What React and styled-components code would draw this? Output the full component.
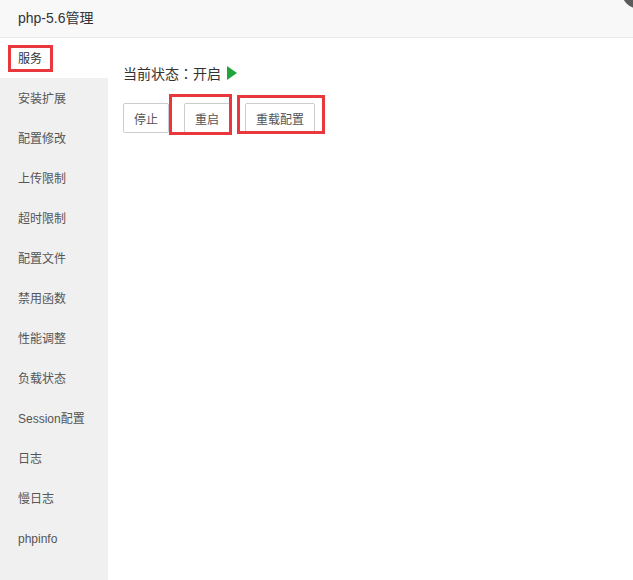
import React from "react";
import styled, { createGlobalStyle } from "styled-components";

const Global = createGlobalStyle`
  html, body { margin: 0; padding: 0; background: #fff; }
  body { font-family: "Liberation Sans", "Noto Sans CJK SC", sans-serif; overflow: hidden; }
  * { box-sizing: border-box; }
`;

const Layer = styled.div`
  position: relative;
  width: 633px;
  height: 580px;
  background: #fff;
  display: flex;
  flex-direction: column;
  overflow: hidden;
`;

const Header = styled.div`
  height: 38px;
  flex: none;
  background: #f8f8f8;
  border-bottom: 1px solid #eaeaea;
  padding: 0 0 3px 18px;
  display: flex;
  align-items: center;
  font-size: 14px;
  color: #333;
`;

const CloseDot = styled.div`
  position: absolute;
  right: -26px;
  top: -29px;
  width: 38px;
  height: 38px;
  border-radius: 50%;
  background: #5c5c5c;
`;

const Body = styled.div`
  flex: 1;
  display: flex;
  min-height: 0;
`;

const Sidebar = styled.ul`
  list-style: none;
  margin: 0;
  padding: 0;
  width: 108px;
  flex: none;
  background: #f0f0f0;
`;

const NavItem = styled.li`
  height: 40px;
  display: flex;
  align-items: center;
  padding: 2px 0 0 18px;
  font-size: 12px;
  line-height: 16px;
  color: ${(p) => (p.$active ? "#333" : "#555")};
  background: ${(p) => (p.$active ? "#fff" : "transparent")};
`;

const Marked = styled.span`
  position: relative;
  display: inline-flex;
`;

const RedBox = styled.span`
  position: absolute;
  top: ${(p) => p.$t}px;
  right: ${(p) => p.$r}px;
  bottom: ${(p) => p.$b}px;
  left: ${(p) => p.$l}px;
  border: 3px solid #e8383d;
  pointer-events: none;
`;

const Content = styled.div`
  flex: 1;
  padding: 25px 15px;
`;

const Status = styled.div`
  display: flex;
  align-items: center;
  height: 20px;
  font-size: 14px;
  color: #333;
  gap: 6px;
`;

const Colon = styled.span`
  font-family: "Noto Sans CJK TC", sans-serif;
`;

const Buttons = styled.div`
  display: flex;
  gap: 15px;
  margin-top: 20px;
`;

const Btn = styled.button`
  height: 30px;
  padding: 0 10px;
  border: 1px solid #ccc;
  border-radius: 2px;
  background: #fff;
  color: #555;
  font-family: inherit;
  font-size: 12px;
  cursor: pointer;
`;

const items = [
  "服务",
  "安装扩展",
  "配置修改",
  "上传限制",
  "超时限制",
  "配置文件",
  "禁用函数",
  "性能调整",
  "负载状态",
  "Session配置",
  "日志",
  "慢日志",
  "phpinfo",
];

export default function App() {
  return (
    <>
      <Global />
      <Layer>
        <CloseDot />
        <Header>php-5.6管理</Header>
        <Body>
          <Sidebar>
            {items.map((it, i) =>
              i === 0 ? (
                <NavItem key={it} $active>
                  <Marked>
                    {it}
                    <RedBox $t={-6} $r={-11} $b={-5} $l={-10} />
                  </Marked>
                </NavItem>
              ) : (
                <NavItem key={it}>{it}</NavItem>
              )
            )}
          </Sidebar>
          <Content>
            <Status>
              <span>
                当前状态<Colon>：</Colon>开启
              </span>
              <svg width="10" height="14" viewBox="0 0 10 14">
                <polygon points="0,0 10,7 0,14" fill="#20a53a" />
              </svg>
            </Status>
            <Buttons>
              <Btn>停止</Btn>
              <Marked>
                <Btn>重启</Btn>
                <RedBox $t={-9} $r={-2} $b={-2} $l={-15} />
              </Marked>
              <Marked>
                <Btn>重载配置</Btn>
                <RedBox $t={-8} $r={-10} $b={-1} $l={-8} />
              </Marked>
            </Buttons>
          </Content>
        </Body>
      </Layer>
    </>
  );
}
